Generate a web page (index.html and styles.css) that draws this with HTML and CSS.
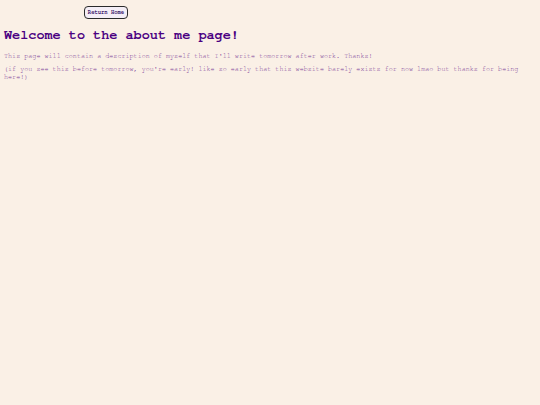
FILE: index.html
```html
<!DOCTYPE html>
<html>
<head>
<meta charset="utf-8">
<link rel="stylesheet" href="styles.css">
</head>
<body>
<nav class="nav">
  <button class="home-btn">Return Home</button>
</nav>
<main class="content">
  <h1 class="title">Welcome to the about me page!</h1>
  <p class="text">This page will contain a description of myself that I'll write tomorrow after work. Thanks!</p>
  <p class="text">(if you see this before tomorrow, you're early! like so early that this website barely exists for now lmao but thanks for being here!)</p>
</main>
</body>
</html>
```
FILE: styles.css
```css
html, body {
  background: #faf0e6;
}
body {
  margin: 0;
  padding: 6px 4px;
  font-family: "Nimbus Mono PS", "Nimbus Mono L", "FreeMono", "Liberation Mono", "Courier New", monospace;
}
.nav {
  display: flex;
  padding-left: 80px;
}
.home-btn {
  font-family: "Nimbus Mono PS", "Nimbus Mono L", "FreeMono", "Liberation Mono", "Courier New", monospace;
  font-size: 5.5px;
  font-weight: bold;
  color: #3d1a6e;
  background: #f4eef6;
  border: 1.5px solid #2a2a2a;
  border-radius: 4px;
  height: 13px;
  width: 44px;
  padding: 0;
}
.title {
  font-size: 13.5px;
  color: #4b0082;
  margin: 9px 0 11px;
  font-weight: bold;
}
.text {
  font-size: 6.75px;
  color: #7a3d96;
  margin: 0 0 6px;
  line-height: 1.1;
}
```
